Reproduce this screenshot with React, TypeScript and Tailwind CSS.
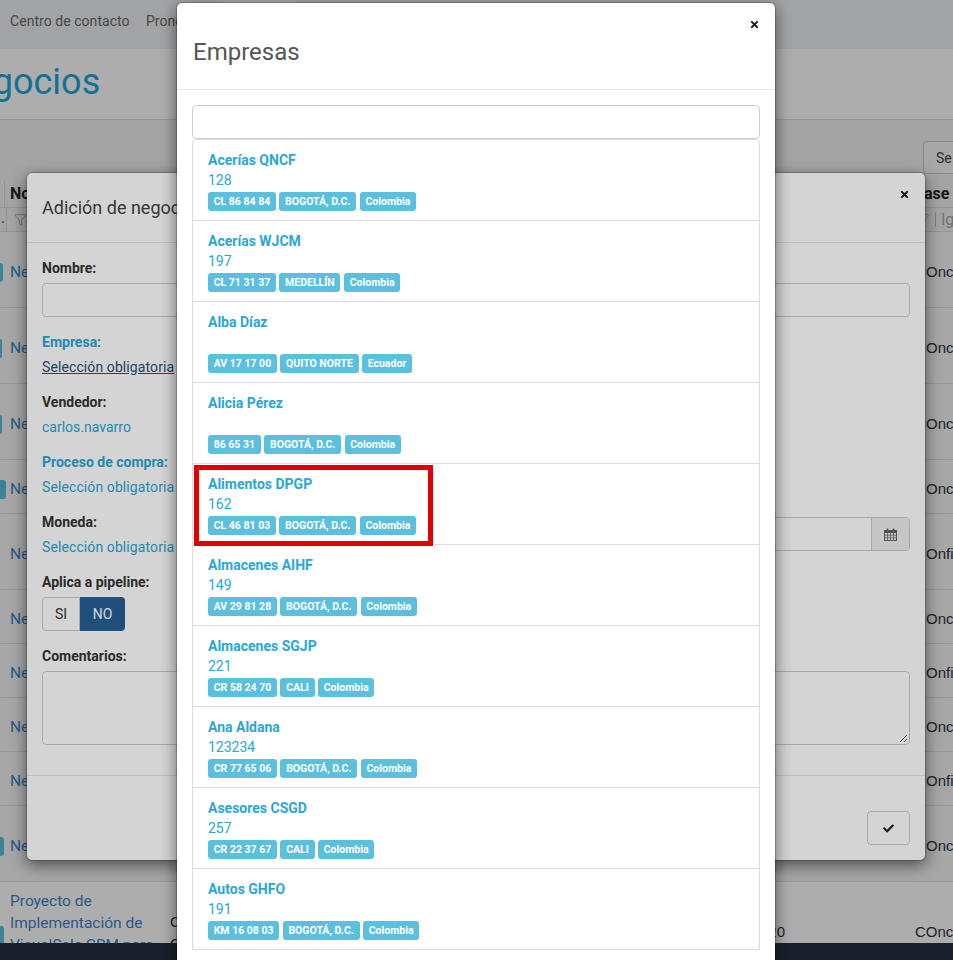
import { Filter } from 'lucide-react'
import { FaCheck, FaTimes } from 'react-icons/fa'

interface Company {
  name: string
  code: string
  address: string
  city: string
  country: string
}

const companies: Company[] = [
  { name: 'Acerías QNCF', code: '128', address: 'CL 86 84 84', city: 'BOGOTÁ, D.C.', country: 'Colombia' },
  { name: 'Acerías WJCM', code: '197', address: 'CL 71 31 37', city: 'MEDELLÍN', country: 'Colombia' },
  { name: 'Alba Díaz', code: '', address: 'AV 17 17 00', city: 'QUITO NORTE', country: 'Ecuador' },
  { name: 'Alicia Pérez', code: '', address: '86 65 31', city: 'BOGOTÁ, D.C.', country: 'Colombia' },
  { name: 'Alimentos DPGP', code: '162', address: 'CL 46 81 03', city: 'BOGOTÁ, D.C.', country: 'Colombia' },
  { name: 'Almacenes AIHF', code: '149', address: 'AV 29 81 28', city: 'BOGOTÁ, D.C.', country: 'Colombia' },
  { name: 'Almacenes SGJP', code: '221', address: 'CR 58 24 70', city: 'CALI', country: 'Colombia' },
  { name: 'Ana Aldana', code: '123234', address: 'CR 77 65 06', city: 'BOGOTÁ, D.C.', country: 'Colombia' },
  { name: 'Asesores CSGD', code: '257', address: 'CR 22 37 67', city: 'CALI', country: 'Colombia' },
  { name: 'Autos GHFO', code: '191', address: 'KM 16 08 03', city: 'BOGOTÁ, D.C.', country: 'Colombia' },
]

// height, width of the status tag at the left edge, text of the last column
const dealRows = [
  { height: 'h-[76px]', tag: 'w-[3px]', phase: 'Onc' },
  { height: 'h-[76px]', tag: 'w-[2px]', phase: 'Onc' },
  { height: 'h-[76px]', tag: 'w-[2px]', phase: 'Onc' },
  { height: 'h-[54px]', tag: 'w-[6px]', phase: 'Onc' },
  { height: 'h-[76px]', tag: 'w-0', phase: 'Onfi' },
  { height: 'h-[54px]', tag: 'w-0', phase: 'Onc' },
  { height: 'h-[54px]', tag: 'w-0', phase: 'Onfi' },
  { height: 'h-[54px]', tag: 'w-0', phase: 'Onc' },
  { height: 'h-[54px]', tag: 'w-0', phase: 'Onfi' },
  { height: 'h-[76px]', tag: 'w-[4px]', phase: 'Onc' },
]

export default function App() {
  return (
    <div className="relative h-[960px] w-[953px] overflow-hidden bg-white font-['Roboto',sans-serif] text-sm text-[#333]">
      <DealsPage />
      <div className="absolute inset-0 bg-black/[0.18]" />
      <NewDealModal />
      <div className="absolute inset-0 bg-black/[0.17]" />
      <CompaniesModal />
    </div>
  )
}

function DealsPage() {
  return (
    <div className="flex h-full flex-col">
      {/* Top nav */}
      <div className="flex h-[49px] shrink-0 bg-[#eef0f2] text-[#6a6a6a]">
        <span className="ml-[10px] w-[136px] pt-[11px] tracking-[0.05px]">Centro de contacto</span>
        <span className="w-[76px] pt-[11px]">Pronóstico</span>
        <span className="h-full w-[74px] bg-[#f8f8f8]" />
      </div>

      {/* Title */}
      <div className="h-[71px] shrink-0 overflow-hidden border-b border-[#dcdcdc] bg-white">
        <h1 className="ml-[-52px] pt-[12px] text-[36px] leading-[42px] text-[#20a8d8]">Negocios</h1>
      </div>

      {/* Toolbar */}
      <div className="flex h-[60px] shrink-0 justify-end bg-[#f2f2f2] pt-[21px]">
        <div className="h-[33px] w-[30px] rounded-l-[4px] border-y border-l border-[#ccc] bg-[#f6f6f6] pl-[12px] pt-[6px] text-[#444]">
          Se
        </div>
      </div>

      {/* Table header */}
      <div className="flex h-[28px] shrink-0 items-center border-b border-[#dcdcdc] bg-[#f2f2f2]">
        <div className="h-full w-[5px] border-r border-[#dcdcdc]" />
        <span className="pl-[5px] text-base font-bold text-[#222]">Nombre</span>
        <span className="ml-auto w-[37.5px] text-base font-bold text-[#222]">Fase</span>
      </div>
      <div className="flex h-[24px] shrink-0 items-center border-b border-[#dcdcdc] bg-[#f2f2f2]">
        <div className="flex h-full w-[7px] items-end justify-center border-r border-[#dcdcdc] pb-[8px]">
          <span className="size-[2px] bg-[#888]" />
        </div>
        <Filter className="ml-[7px] size-[13px] text-[#666]" strokeWidth={1} />
        <div className="ml-auto flex h-full w-[36px] items-center">
          <Filter className="size-[13px] shrink-0 text-[#999]" strokeWidth={1} />
          <span className="ml-[5px] h-[15px] w-px shrink-0 bg-[#bbb]" />
          <span className="pl-[5px] text-base text-[#aaa]">Igual</span>
        </div>
      </div>

      {/* Rows */}
      {dealRows.map((row, i) => (
        <div key={i} className={`flex shrink-0 items-center border-b border-[#e0e0e0] bg-[#f6f6f6] pt-[5px] ${row.height}`}>
          <div className="w-[10px]">
            <div className={`h-[19px] rounded-r-[3px] bg-[#5bc0de] ${row.tag}`} />
          </div>
          <span className="mt-[1px] text-[15.5px] text-[#3b86c8]">Negocio</span>
          <span className="ml-auto w-[27px] whitespace-nowrap font-['Liberation_Sans',sans-serif] text-[15px] text-[#333]">
            {row.phase}
          </span>
        </div>
      ))}
      <div className="flex min-h-0 flex-1 bg-white">
        <div className="w-[10px] pt-[44px]">
          <div className="h-[19px] w-[4px] rounded-r-[3px] bg-[#5bc0de]" />
        </div>
        <div className="w-[160px] pt-[8px] text-[15.5px] leading-[22px] text-[#3b86c8]">
          Proyecto de Implementación de VisualSale CRM para
        </div>
        <div className="pt-[29px] font-['Liberation_Sans',sans-serif] text-[15px] leading-[22px] text-[#333]">
          C
          <br />O
        </div>
        <span className="ml-[570px] pt-[39px] font-['Liberation_Sans',sans-serif] text-[15px] text-[#333]">2020</span>
        <span className="ml-auto w-[38px] whitespace-nowrap pt-[39px] font-['Liberation_Sans',sans-serif] text-[15px] text-[#333]">
          COnc
        </span>
      </div>

      <div className="absolute inset-x-0 bottom-0 h-[17px] bg-[#233040]" />
    </div>
  )
}

function NewDealModal() {
  return (
    <div className="absolute left-[26px] top-[172px] h-[689px] w-[900px] rounded-[6px] border border-black/20 bg-white bg-clip-padding shadow-[0_5px_15px_rgba(0,0,0,0.5)]">
      <div className="flex h-[70px] items-start justify-between border-b border-[#e5e5e5] px-[15px]">
        <h4 className="pt-[22px] text-lg leading-[26px] text-[#444]">Adición de negocio</h4>
        <FaTimes className="mt-[16px] size-[11px] text-[#222]" />
      </div>

      <div className="flex flex-col px-[15px] pt-[15px]">
        <FieldLabel>Nombre:</FieldLabel>
        <div className="mb-[15px] mt-[5px] h-[34px] rounded-[4px] border border-[#ccc]" />

        <FieldLabel accent>Empresa:</FieldLabel>
        <a className="mb-[15px] mt-[5px] leading-5 tracking-[0.1px] text-[#23527c] underline">Selección obligatoria</a>

        <FieldLabel>Vendedor:</FieldLabel>
        <a className="mb-[15px] mt-[5px] leading-5 text-[#2ba6d4]">carlos.navarro</a>

        <FieldLabel accent>Proceso de compra:</FieldLabel>
        <a className="mb-[15px] mt-[5px] leading-5 tracking-[0.1px] text-[#2ba6d4]">Selección obligatoria</a>

        <div className="mb-[15px] grid h-[45px] grid-cols-2 gap-[30px]">
          <div className="flex flex-col">
            <FieldLabel>Moneda:</FieldLabel>
            <a className="mt-[5px] leading-5 tracking-[0.1px] text-[#2ba6d4]">Selección obligatoria</a>
          </div>
          <div className="mt-[5px] flex h-[34px] rounded-[4px] border border-[#ccc]">
            <div className="flex-1" />
            <div className="flex w-[38px] items-center justify-center rounded-r-[3px] border-l border-[#ccc] bg-[#eee]">
              <CalendarIcon />
            </div>
          </div>
        </div>

        <FieldLabel>Aplica a pipeline:</FieldLabel>
        <div className="mb-[15px] mt-[5px] flex h-[34px] w-[83px]">
          <div className="flex w-[38px] items-center justify-center rounded-l-[4px] border border-[#ccc] text-[#333]">SI</div>
          <div className="flex w-[45px] items-center justify-center rounded-r-[4px] bg-[#265f94] text-white">NO</div>
        </div>

        <FieldLabel>Comentarios:</FieldLabel>
        <div className="relative mt-[5px] h-[74px] rounded-[4px] border border-[#ccc]">
          <svg className="absolute bottom-[1px] right-[1px] size-[9px] text-[#666]" viewBox="0 0 9 9" fill="none" stroke="currentColor">
            <path d="M1 8 8 1M5 8 8 5" />
          </svg>
        </div>
      </div>

      {/* Footer */}
      <div className="mt-[30px] flex h-[85px] justify-end border-t border-[#e5e5e5] px-[15px] pt-[35px]">
        <div className="flex h-[34px] w-[43px] items-center justify-center rounded-[4px] border border-[#ccc]">
          <FaCheck className="size-[11px] text-[#222]" />
        </div>
      </div>
    </div>
  )
}

function CalendarIcon() {
  return (
    <svg className="size-[13px] text-[#666]" viewBox="0 0 13 13" fill="none" stroke="currentColor" strokeWidth="1">
      <path d="M3.5 0.5v3M9.5 0.5v3" strokeWidth="1.6" />
      <path fill="currentColor" d="M1 2h11v3H1z" stroke="none" />
      <rect x="0.5" y="2.5" width="12" height="10" />
      <path d="M0.5 7.2h12M0.5 9.8h12M3.5 5v7.5M6.5 5v7.5M9.5 5v7.5" strokeWidth="0.7" />
    </svg>
  )
}

function FieldLabel({ children, accent }: { children: string; accent?: boolean }) {
  return <label className={`font-bold leading-5 ${accent ? 'text-[#2ba6d4]' : 'text-[#333]'}`}>{children}</label>
}

function CompaniesModal() {
  return (
    <div className="absolute left-[176px] top-[2px] h-[1000px] w-[600px] rounded-[6px] border border-black/20 bg-white bg-clip-padding shadow-[0_5px_15px_rgba(0,0,0,0.5)]">
      <div className="flex h-[87px] items-start justify-between border-b border-[#e5e5e5] px-[15px]">
        <h4 className="pl-px pt-[33px] text-2xl leading-8 text-[#555]">Empresas</h4>
        <FaTimes className="mt-[16px] size-[11px] text-[#222]" />
      </div>

      <div className="px-[15px] pt-[15px]">
        <div className="h-[34px] rounded-[4px] border border-[#ccc] bg-white" />
        <div className="rounded-t-[4px] border-x border-t border-[#ddd]">
          {companies.map((company) => (
            <CompanyItem key={company.name} company={company} />
          ))}
        </div>
      </div>
    </div>
  )
}

function CompanyItem({ company }: { company: Company }) {
  return (
    <div className="relative h-[81px] border-b border-[#ddd] px-[15px] pt-[10px] text-[#2ba6d4]">
      <p className="font-bold leading-5">{company.name}</p>
      <p className="h-5 leading-5">{company.code}</p>
      <div className="mt-[2px] flex gap-[3.5px]">
        <Tag>{company.address}</Tag>
        <Tag>{company.city}</Tag>
        <Tag>{company.country}</Tag>
      </div>
      {company.name === 'Alimentos DPGP' && (
        <div className="absolute left-px top-px h-[81px] w-[239px] border-[5px] border-[#e30000]" />
      )}
    </div>
  )
}

function Tag({ children }: { children: string }) {
  return (
    <span className="flex h-[19px] items-center rounded-[3px] bg-[#5bc0de] px-[5.7px] text-[10.5px] font-bold text-white">
      {children}
    </span>
  )
}
